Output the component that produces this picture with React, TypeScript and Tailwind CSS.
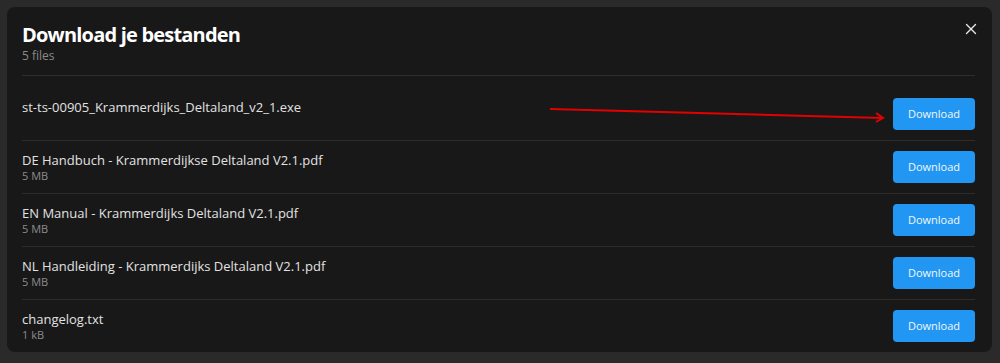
import { X } from "lucide-react";

type FileItem = {
  name: string;
  size?: string;
};

const FILES: FileItem[] = [
  { name: "st-ts-00905_Krammerdijks_Deltaland_v2_1.exe" },
  { name: "DE Handbuch - Krammerdijkse Deltaland V2.1.pdf", size: "5 MB" },
  { name: "EN Manual - Krammerdijks Deltaland V2.1.pdf", size: "5 MB" },
  { name: "NL Handleiding - Krammerdijks Deltaland V2.1.pdf", size: "5 MB" },
  { name: "changelog.txt", size: "1 kB" },
];

function FileRow({ file, last }: { file: FileItem; last: boolean }) {
  return (
    <div
      className={`flex items-center justify-between py-[10px] ${
        last ? "" : "border-b border-[#2c2c2c]"
      }`}
    >
      <div className="flex flex-col">
        <span className="text-[13px] leading-[18px] text-[#e2e2e2]">{file.name}</span>
        <span className="text-[11px] leading-[14px] text-[#8c8c8c]">{file.size ?? "\u00a0"}</span>
      </div>
      <button className="w-[82px] h-[32px] rounded-[4px] bg-[#2196f3] text-[11px] text-[#f2f6fa]">
        Download
      </button>
    </div>
  );
}

export default function App() {
  return (
    <main
      className="w-[1000px] h-[363px] bg-[#2a2a2a] pt-[7px] pl-[7px] pr-[8px] pb-[11px] overflow-hidden"
      style={{ fontFamily: '"Open Sans", "Noto Sans", sans-serif' }}
    >
      <div className="relative h-full rounded-[8px] bg-[#181818] pl-[15px] pr-[17px] pt-[14px]">
        {/* Header */}
        <div className="flex items-start justify-between border-b border-[#2e2e2e] pb-[12px]">
          <div className="flex flex-col">
            <h1 className="text-[20px] leading-[28px] font-bold text-white tracking-[-0.8px]">
              Download je bestanden
            </h1>
            <span className="text-[12px] leading-[14px] text-[#8a8a8a]">5 files</span>
          </div>
          <button className="-mt-[1px] -mr-[5px] text-[#e8e8e8]">
            <X size={18} strokeWidth={1.8} />
          </button>
        </div>

        {/* File list */}
        <div className="pt-[12px] flex flex-col">
          {FILES.map((f, i) => (
            <FileRow key={f.name} file={f} last={i === FILES.length - 1} />
          ))}
        </div>

        {/* Red annotation arrow */}
        <svg
          className="absolute left-[536px] top-[94px] pointer-events-none"
          width="346"
          height="24"
          viewBox="0 0 346 24"
        >
          <line x1="7" y1="8" x2="340" y2="17" stroke="#e30000" strokeWidth="2" />
          <polyline
            points="333,12 340,17 333,21"
            fill="none"
            stroke="#e30000"
            strokeWidth="2"
          />
        </svg>
      </div>
    </main>
  );
}
